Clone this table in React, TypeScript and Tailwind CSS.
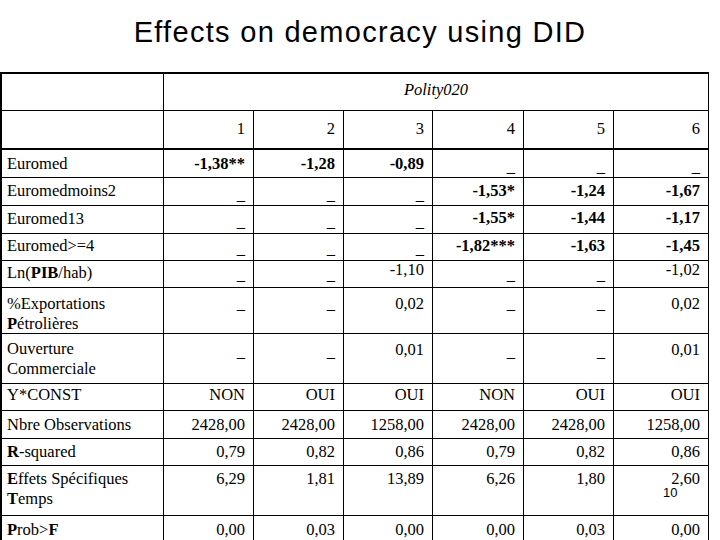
import type { ReactNode } from 'react';

type Row = {
  label: ReactNode;
  vals: string[];
  h: string;
  lp: string;
  vp: string;
  dp: string;
  bold?: boolean;
  tight?: boolean;
};

const cols = 'grid grid-cols-[162px_90px_90px_89px_91px_90px_95px]';

const rows: Row[] = [
  { label: 'Euromed', vals: ['-1,38**', '-1,28', '-0,89', '_', '_', '_'], h: 'h-[28px]', lp: 'pt-[4px]', vp: 'pt-[4px]', dp: 'pt-[7px]', bold: true },
  { label: 'Euromedmoins2', vals: ['_', '_', '_', '-1,53*', '-1,24', '-1,67'], h: 'h-[28px]', lp: 'pt-[3px]', vp: 'pt-[3px]', dp: 'pt-[7px]', bold: true },
  { label: 'Euromed13', vals: ['_', '_', '_', '-1,55*', '-1,44', '-1,17'], h: 'h-[28px]', lp: 'pt-[3px]', vp: 'pt-[2px]', dp: 'pt-[6px]', bold: true },
  { label: 'Euromed>=4', vals: ['_', '_', '_', '-1,82***', '-1,63', '-1,45'], h: 'h-[27px]', lp: 'pt-[2px]', vp: 'pt-[2px]', dp: 'pt-[5px]', bold: true },
  { label: <>Ln(<b>PIB</b>/hab)</>, vals: ['_', '_', '-1,10', '_', '_', '-1,02'], h: 'h-[27px]', lp: 'pt-[2px]', vp: 'pt-[3px]', dp: 'pt-[4px]', tight: true },
  { label: <>%Exportations<br /><b>P</b>étrolières</>, vals: ['_', '_', '0,02', '_', '_', '0,02'], h: 'h-[46px]', lp: 'pt-[6px]', vp: 'pt-[6px]', dp: 'pt-[6px]' },
  { label: <>Ouverture<br />Commerciale</>, vals: ['_', '_', '0,01', '_', '_', '0,01'], h: 'h-[50px]', lp: 'pt-[5px]', vp: 'pt-[6px]', dp: 'pt-[8px]' },
  { label: 'Y*CONST', vals: ['NON', 'OUI', 'OUI', 'NON', 'OUI', 'OUI'], h: 'h-[27px]', lp: 'pt-[1px]', vp: 'pt-[1px]', dp: 'pt-[1px]' },
  { label: 'Nbre Observations', vals: ['2428,00', '2428,00', '1258,00', '2428,00', '2428,00', '1258,00'], h: 'h-[28px]', lp: 'pt-[4px]', vp: 'pt-[4px]', dp: 'pt-[4px]' },
  { label: <><b>R</b>-squared</>, vals: ['0,79', '0,82', '0,86', '0,79', '0,82', '0,86'], h: 'h-[27px]', lp: 'pt-[3px]', vp: 'pt-[3px]', dp: 'pt-[3px]' },
  { label: <><b>E</b>ffets Spécifiques<br /><b>T</b>emps</>, vals: ['6,29', '1,81', '13,89', '6,26', '1,80', '2,60'], h: 'h-[50px]', lp: 'pt-[3px]', vp: 'pt-[3px]', dp: 'pt-[3px]' },
  { label: <><b>P</b>rob&gt;<b>F</b></>, vals: ['0,00', '0,03', '0,00', '0,00', '0,03', '0,00'], h: 'h-[28px]', lp: 'pt-[4px]', vp: 'pt-[4px]', dp: 'pt-[4px]' },
];

export default function App() {
  return (
    <div className="relative w-[720px] h-[540px] overflow-hidden bg-white text-black">
      <h1 className="pt-[15px] h-[49px] text-center font-['Liberation_Sans',Arial,sans-serif] text-[29px] leading-[34px] tracking-[1.3px]">
        Effects on democracy using DID
      </h1>

      <div className="mt-[23px] w-[709px] border-l-2 border-t-2 border-black font-['Liberation_Serif','Times_New_Roman',serif] text-[16.5px] leading-[20px]">
        <div className={`${cols} h-[37px] border-b border-black`}>
          <div className="border-r border-black" />
          <div className="col-span-6 border-r border-black pt-[6px] text-center italic">Polity020</div>
        </div>
        <div className={`${cols} h-[39px] border-b-2 border-black`}>
          <div className="border-r border-black" />
          {['1', '2', '3', '4', '5', '6'].map(n => (
            <div key={n} className="border-r border-black pt-[8px] pr-[8px] text-right">{n}</div>
          ))}
        </div>

        {rows.map((r, i) => (
          <div key={i} className={`${cols} ${r.h} border-b border-black`}>
            <div className={`border-r border-black pl-[5px] ${r.lp}`}>{r.label}</div>
            {r.vals.map((v, j) => {
              const dash = v === '_';
              return (
                <div
                  key={j}
                  className={`border-r border-black pr-[8px] text-right ${dash ? r.dp : r.vp} ${r.bold && !dash ? 'font-bold' : ''} ${r.tight && !dash ? 'leading-[12px]' : ''}`}
                >
                  {v}
                </div>
              );
            })}
          </div>
        ))}
      </div>

      <span className="absolute left-[663px] top-[485px] font-['Liberation_Sans',Arial,sans-serif] text-[13px] leading-[15px]">10</span>
    </div>
  );
}
